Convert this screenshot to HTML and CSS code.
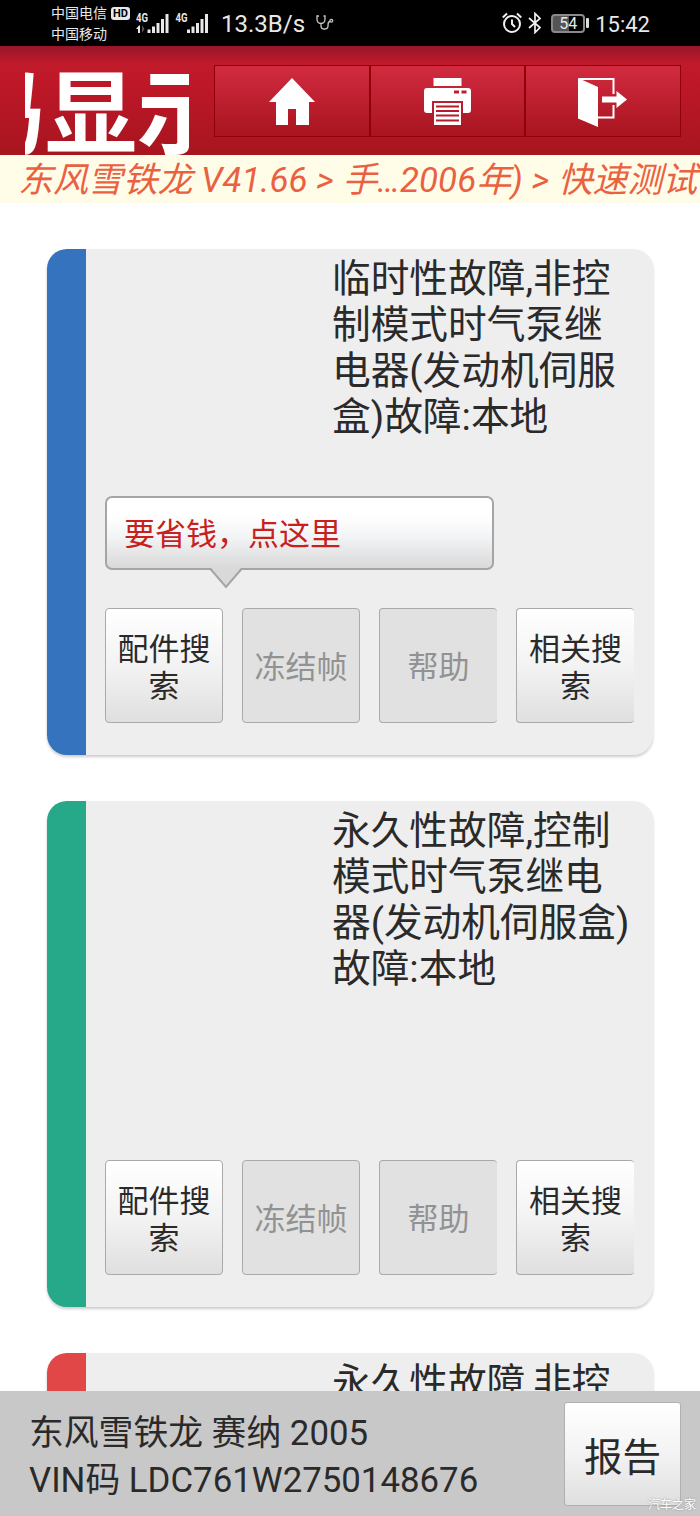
FILE: index.html
```html
<!DOCTYPE html>
<html lang="zh-CN">
<head>
    <meta charset="UTF-8">
    <meta name="viewport" content="width=device-width, initial-scale=1.0">
    <title>故障码显示</title>
    <link rel="stylesheet" href="styles.css">
</head>
<body>
    <div class="status-bar">
        <div class="carriers">
            <div class="carrier">中国电信<span class="hd">HD</span></div>
            <div class="carrier">中国移动</div>
        </div>
        <svg class="signals" width="76" height="24" viewBox="0 0 76 24">
            <g fill="#e8e8e8">
                <text class="net" x="0" y="12" textLength="12" lengthAdjust="spacingAndGlyphs">4G</text>
                <path d="M0 19l3-3.500h1V23H2v-4z"/>
                <path d="M6 15l2.500 4L6 23z" fill="#555"/>
                <path d="M11.500 19.500h3V23h-3zM16 16.500h3V23h-3zM20.500 13h3v10h-3zM25 9h3v14h-3zM29.500 4h3v19h-3z"/>
                <text class="net" x="39.500" y="12" textLength="12" lengthAdjust="spacingAndGlyphs">4G</text>
                <path d="M51 19.500h3V23h-3zM55.500 16.500h3V23h-3zM60 13h3v10h-3zM64.500 9h3v14h-3zM69 4h3v19h-3z"/>
            </g>
        </svg>
        <span class="speed">13.3B/s</span>
        <svg class="steth" width="18" height="16" viewBox="0 0 18 16" fill="none" stroke="#c8c8c8" stroke-width="1.300">
            <path d="M3 1H1v3c0 3 2 4.500 4 4.500S9 7 9 4V1H7.500M5 8.500V11c0 4 7 4 7 0 0-3 0-4.500 2-4.500"/>
            <circle cx="15.300" cy="5.800" r="1.400"/>
        </svg>
        <div class="status-right">
            <svg width="20" height="22" viewBox="0 0 20 22" fill="none" stroke="#f0f0f0" stroke-width="2">
                <circle cx="10" cy="12" r="8"/>
                <path d="M10 7.500V12l3 3M.800 5.500L5 1.500M19.200 5.500L15 1.500"/>
            </svg>
            <svg class="bluetooth" width="14" height="22" viewBox="0 0 14 22" fill="none" stroke="#f0f0f0" stroke-width="1.700">
                <path d="M1 6l11 9.500-5 5V1.500l5 5L1 16"/>
            </svg>
            <div class="battery"><span>54</span></div>
            <span class="battery-tip"></span>
            <span class="clock">15:42</span>
        </div>
    </div>

    <header class="header">
        <h1 class="title">故障码显示</h1>
        <nav class="nav">
            <a class="nav-item">
                <svg width="46" height="48" viewBox="0 0 46 48" fill="#fff">
                    <path d="M23 0L46 24h-6v23H27V31h-8v16H7V24H0z"/>
                </svg>
            </a>
            <a class="nav-item">
                <svg width="47" height="48" viewBox="0 0 47 48">
                    <path d="M9.500 0h28v8h-28z" fill="#fff"/>
                    <path d="M3 10h41q3 0 3 3v19q0 3-3 3h-5V23H8v12H3q-3 0-3-3V13q0-3 3-3z" fill="#fff"/>
                    <path d="M30 12.500h5v3h-5zM37.500 12.500h5v3h-5z" fill="#bd1e32"/>
                    <path d="M10 25h27v22H10z" fill="#fff"/>
                    <path d="M12 28.500h23M12 33h23M12 37.500h23M12 42.500h23" stroke="#b51b2b" stroke-width="1.800"/>
                </svg>
            </a>
            <a class="nav-item">
                <svg width="50" height="49" viewBox="0 0 50 49">
                    <path d="M1 1h34.500v15M35.500 27v12.500H20" fill="none" stroke="#fff" stroke-width="2"/>
                    <path d="M0 0l20 9v40L0 40.500z" fill="#fff"/>
                    <path d="M24 18.500h14.500V13L49 21.500 38.500 30v-5.500H24z" fill="#fff"/>
                </svg>
            </a>
        </nav>
    </header>

    <div class="breadcrumb">东风雪铁龙 V41.66 &gt; 手…2006年) &gt; 快速测试</div>

    <main class="list">
        <section class="card blue">
            <div class="card-body">
                <p class="fault">临时性故障,非控制模式时气泵继电器(发动机伺服盒)故障:本地</p>
                <div class="bubble">
                    要省钱，点这里
                    <svg class="bubble-arrow" width="34" height="21" viewBox="0 0 34 21">
                        <path d="M2 0L17 18.500 32 0z" fill="#d9d9da"/>
                        <path d="M1.500 1L17 19 32.500 1" fill="none" stroke="#a5a5a5" stroke-width="2"/>
                    </svg>
                </div>
                <div class="actions">
                    <button class="btn">配件搜索</button>
                    <button class="btn" disabled>冻结帧</button>
                    <button class="btn cut" disabled>帮助</button>
                    <button class="btn cut">相关搜索</button>
                </div>
            </div>
        </section>

        <section class="card green">
            <div class="card-body">
                <p class="fault">永久性故障,控制模式时气泵继电器(发动机伺服盒)故障:本地</p>
                <div class="actions">
                    <button class="btn">配件搜索</button>
                    <button class="btn" disabled>冻结帧</button>
                    <button class="btn cut" disabled>帮助</button>
                    <button class="btn cut">相关搜索</button>
                </div>
            </div>
        </section>

        <section class="card red">
            <div class="card-body">
                <p class="fault">永久性故障,非控</p>
            </div>
        </section>
    </main>

    <footer class="footer">
        <div class="vehicle">
            <div>东风雪铁龙 赛纳 2005</div>
            <div>VIN码 LDC761W2750148676</div>
        </div>
        <button class="report-btn">报告</button>
        <span class="watermark">汽车之家</span>
    </footer>
</body>
</html>
```
FILE: styles.css
```css
* {
    box-sizing: border-box;
}

body {
    margin: 0;
    height: 1516px;
    display: flex;
    flex-direction: column;
    overflow: hidden;
    background-color: #fff;
    color: #2a2a2a;
    font-family: Roboto, "Noto Sans CJK SC", sans-serif;
}

button {
    font-family: inherit;
    color: inherit;
}

/* phone status bar */
.status-bar {
    flex: none;
    height: 46px;
    padding: 0 50px 0 51px;
    display: flex;
    align-items: center;
    background-color: #000;
    color: #e8e8e8;
}

.carriers {
    width: 85px;
    padding-top: 2px;
}

.carrier {
    display: flex;
    align-items: center;
    height: 21px;
    font-size: 14px;
    line-height: 21px;
    white-space: nowrap;
}

.hd {
    width: 19px;
    height: 13px;
    margin-left: 4px;
    border-radius: 3px;
    background-color: #e8e8e8;
    color: #000;
    font-size: 11px;
    font-weight: bold;
    line-height: 13px;
    text-align: center;
}

.signals {
    margin-top: -3px;
}

.net {
    font-size: 12.500px;
    font-weight: bold;
}

.speed {
    margin-left: 9px;
    width: 80px;
    font-size: 24px;
    line-height: 46px;
    padding-top: 2px;
    white-space: nowrap;
}

.steth {
    margin-left: 15px;
}

.status-right {
    margin-left: auto;
    display: flex;
    align-items: center;
}

.bluetooth {
    margin-left: 6px;
}

.battery {
    width: 34px;
    height: 19px;
    margin-left: 9px;
    border: 2px solid #8a8a8a;
    border-radius: 4px;
    background: linear-gradient(to right, #555 55%, #000 55%);
    font-size: 16px;
    line-height: 16px;
    text-align: center;
}

.battery-tip {
    width: 3px;
    height: 10px;
    margin-left: 1px;
    border-radius: 1px;
    background-color: #ddd;
}

.clock {
    margin-left: 6px;
    padding-top: 2px;
    font-size: 22px;
}

/* header */
.header {
    flex: none;
    height: 109px;
    padding: 19px 19px 0 25px;
    display: flex;
    justify-content: space-between;
    background: linear-gradient(#97152a 0, #c01b2c 18px, #c01829 30px, #a7151f 100%);
}

.title {
    width: 164px;
    height: 90px;
    margin: 0;
    overflow: hidden;
    color: #fff;
    font-size: 92px;
    font-weight: bold;
    line-height: 101px;
    text-indent: -256px;
    white-space: nowrap;
}

.nav {
    display: flex;
    width: 467px;
    height: 72px;
    border: 1px solid #8f0007;
}

.nav-item {
    flex: 1;
    display: flex;
    align-items: center;
    justify-content: center;
    padding-top: 2px;
    background: linear-gradient(#d22b40, #a8141f);
}

.nav-item + .nav-item {
    border-left: 2px solid #8f0007;
}

.breadcrumb {
    flex: none;
    height: 48px;
    padding-left: 18px;
    background-color: #fffce8;
    color: #ea6142;
    font-size: 34.900px;
    font-style: italic;
    line-height: 52px;
    white-space: nowrap;
}

/* fault list */
.list {
    flex: 1;
    min-height: 0;
    overflow: hidden;
    display: flex;
    flex-direction: column;
    gap: 46px;
    padding: 46px 47px 0;
}

.card {
    flex: none;
    height: 506px;
    border-left: 39px solid;
    border-radius: 20px;
    background-color: #eee;
    box-shadow: 0 2px 3px rgba(0, 0, 0, 0.2);
}

.blue {
    border-color: #3673be;
}

.green {
    border-color: #26a989;
}

.red {
    border-color: #e24747;
}

.card-body {
    height: 100%;
    padding: 7px 19px 32px;
    display: flex;
    flex-direction: column;
}

.fault {
    width: 302px;
    margin: 0 0 0 227px;
    font-size: 38.700px;
    line-height: 46px;
}

.bubble {
    position: relative;
    width: 389px;
    height: 74px;
    margin-top: 56px;
    padding-left: 17px;
    border: 2px solid #a5a5a5;
    border-radius: 7px;
    background: linear-gradient(#fff 25%, #f3f4f5 55%, #d9d9da);
    color: #c8201c;
    font-size: 31px;
    line-height: 74px;
}

.bubble-arrow {
    position: absolute;
    left: 102px;
    top: 70px;
}

.actions {
    display: flex;
    justify-content: space-between;
    margin-top: auto;
}

.btn {
    width: 118px;
    height: 115px;
    padding: 4px 10px 0;
    border: 1px solid #aaa;
    border-radius: 4px;
    background: linear-gradient(#fff, #f3f3f3 50%, #dfdfdf);
    font-size: 31px;
    line-height: 37px;
}

.btn:disabled {
    background: #e1e1e1;
    color: #929292;
}

.cut {
    border-right: none;
}

/* footer */
.footer {
    flex: none;
    position: relative;
    height: 125px;
    padding: 11px 19px 0 29px;
    display: flex;
    justify-content: space-between;
    background-color: #c8c8c8;
}

.vehicle {
    padding-top: 8px;
    font-size: 34.800px;
    line-height: 47px;
}

.report-btn {
    width: 117px;
    height: 104px;
    padding: 0;
    border: 1px solid #b0b0b0;
    border-radius: 3px;
    background: linear-gradient(#fff, #f3f3f3 50%, #dfdfdf);
    font-size: 38.600px;
}

.watermark {
    position: absolute;
    right: 4px;
    bottom: 2px;
    color: #fff;
    font-size: 12px;
    line-height: 18px;
    text-shadow: 0 0 2px #888;
}
```
